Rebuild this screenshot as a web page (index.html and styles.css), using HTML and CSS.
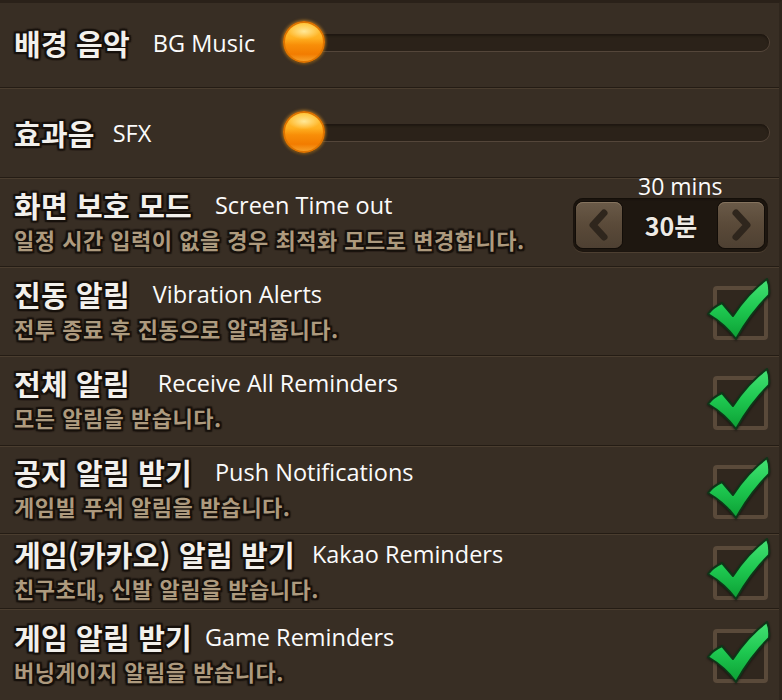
FILE: index.html
```html
<!DOCTYPE html>
<html lang="ko">
<head>
<meta charset="utf-8">
<link rel="stylesheet" href="styles.css">
</head>
<body>
<div class="panel">
  <div class="row slider-row first">
    <div class="line"><span class="ko">배경 음악</span><span class="en">BG Music</span></div>
    <div class="slider"><div class="track"></div><div class="knob"></div></div>
  </div>
  <div class="row slider-row h90">
    <div class="line"><span class="ko">효과음</span><span class="en gap-s">SFX</span></div>
    <div class="slider"><div class="track"></div><div class="knob"></div></div>
  </div>
  <div class="row h89">
    <div class="text">
      <div class="line"><span class="ko">화면 보호 모드</span><span class="en">Screen Time out</span></div>
      <div class="desc">일정 시간 입력이 없을 경우 최적화 모드로 변경합니다.</div>
    </div>
    <div class="stepper">
      <span class="note">30 mins</span>
      <div class="btn">
        <svg viewBox="0 0 46 46" width="46" height="46"><path d="M28 11 L17 23 L28 35" fill="none" stroke="#2f261d" stroke-width="7" stroke-linecap="round" stroke-linejoin="round"/></svg>
      </div>
      <span class="value">30분</span>
      <div class="btn">
        <svg viewBox="0 0 46 46" width="46" height="46"><path d="M18 11 L29 23 L18 35" fill="none" stroke="#2f261d" stroke-width="7" stroke-linecap="round" stroke-linejoin="round"/></svg>
      </div>
    </div>
  </div>
  <div class="row h89">
    <div class="text">
      <div class="line"><span class="ko">진동 알림</span><span class="en">Vibration Alerts</span></div>
      <div class="desc">전투 종료 후 진동으로 알려줍니다.</div>
    </div>
    <div class="check"><svg viewBox="0 0 72 70" width="72" height="70"><defs><linearGradient id="g1" x1="0" y1="0" x2="0" y2="1"><stop offset="0" stop-color="#45e275"/><stop offset="0.5" stop-color="#1ec850"/><stop offset="1" stop-color="#0c9f34"/></linearGradient></defs><path d="M5 40 Q10 33 19 29 L30 42 Q45 19 64 5 Q67 12 66 21 Q47 40 33 65 Q22 50 5 40 Z" fill="url(#g1)" stroke="#0f3518" stroke-width="2" stroke-linejoin="round"/></svg></div>
  </div>
  <div class="row h90">
    <div class="text">
      <div class="line"><span class="ko">전체 알림</span><span class="en gap-l">Receive All Reminders</span></div>
      <div class="desc">모든 알림을 받습니다.</div>
    </div>
    <div class="check"><svg viewBox="0 0 72 70" width="72" height="70"><path d="M5 40 Q10 33 19 29 L30 42 Q45 19 64 5 Q67 12 66 21 Q47 40 33 65 Q22 50 5 40 Z" fill="url(#g1)" stroke="#0f3518" stroke-width="2" stroke-linejoin="round"/></svg></div>
  </div>
  <div class="row h88">
    <div class="text">
      <div class="line"><span class="ko">공지 알림 받기</span><span class="en">Push Notifications</span></div>
      <div class="desc">게임빌 푸쉬 알림을 받습니다.</div>
    </div>
    <div class="check"><svg viewBox="0 0 72 70" width="72" height="70"><path d="M5 40 Q10 33 19 29 L30 42 Q45 19 64 5 Q67 12 66 21 Q47 40 33 65 Q22 50 5 40 Z" fill="url(#g1)" stroke="#0f3518" stroke-width="2" stroke-linejoin="round"/></svg></div>
  </div>
  <div class="row h75">
    <div class="text">
      <div class="line"><span class="ko">게임(카카오) 알림 받기</span><span class="en gap-k">Kakao Reminders</span></div>
      <div class="desc">친구초대, 신발 알림을 받습니다.</div>
    </div>
    <div class="check"><svg viewBox="0 0 72 70" width="72" height="70"><path d="M5 40 Q10 33 19 29 L30 42 Q45 19 64 5 Q67 12 66 21 Q47 40 33 65 Q22 50 5 40 Z" fill="url(#g1)" stroke="#0f3518" stroke-width="2" stroke-linejoin="round"/></svg></div>
  </div>
  <div class="row h90 last">
    <div class="text">
      <div class="line"><span class="ko">게임 알림 받기</span><span class="en gap-xs">Game Reminders</span></div>
      <div class="desc">버닝게이지 알림을 받습니다.</div>
    </div>
    <div class="check"><svg viewBox="0 0 72 70" width="72" height="70"><path d="M5 40 Q10 33 19 29 L30 42 Q45 19 64 5 Q67 12 66 21 Q47 40 33 65 Q22 50 5 40 Z" fill="url(#g1)" stroke="#0f3518" stroke-width="2" stroke-linejoin="round"/></svg></div>
  </div>
</div>
</body>
</html>
```

FILE: styles.css
```css
* { box-sizing: border-box; }
html, body { margin: 0; padding: 0; background: #372d23; }
body { width: 782px; height: 700px; overflow: hidden; }

.panel {
  width: 782px;
  height: 700px;
  background: #382e24;
  border-top: 3px solid #2a2119;
  border-right: 3px solid #2f261d;
  display: flex;
  flex-direction: column;
}

.row {
  display: flex;
  align-items: center;
  justify-content: space-between;
  padding: 0 11px 0 14px;
  border-bottom: 1px solid #241c14;
  box-shadow: inset 0 1px 0 #4a3d2f;
  flex: none;
}
.row.first { box-shadow: none; height: 85px; padding-bottom: 5px; }
.row.last { border-bottom: none; }
.h88 { height: 88px; }
.h89 { height: 89px; }
.h90 { height: 90px; }
.h75 { height: 75px; }

.slider-row {
  display: grid;
  grid-template-columns: 269px 1fr;
  padding-right: 10px;
}

.text { margin-top: -5px; }

.line {
  display: flex;
  align-items: center;
  gap: 23px;
  height: 36px;
}

.ko {
  font-family: "Noto Sans CJK KR", "Noto Sans", sans-serif;
  font-weight: 700;
  font-size: 29px;
  color: #f2f0ec;
  letter-spacing: 0.2px;
  text-shadow:
    -2px -2px 1px #17110c, 2px -2px 1px #17110c, -2px 2px 1px #17110c, 2px 2px 1px #17110c,
    0 -2px 1px #17110c, 0 2px 1px #17110c, -2px 0 1px #17110c, 2px 0 1px #17110c;
  white-space: nowrap;
}

.en {
  font-family: "Open Sans", "Noto Sans", sans-serif;
  font-size: 23.5px;
  color: #fbfbfb;
  white-space: nowrap;
}
.gap-s { margin-left: -5px; }
.gap-l { margin-left: 5px; }
.gap-xs { margin-left: -10px; }
.gap-k { margin-left: -6px; }

.desc {
  margin-top: 2px;
  font-family: "Noto Sans CJK KR", "Noto Sans", sans-serif;
  font-weight: 700;
  font-size: 22px;
  line-height: 28px;
  color: #ad9a7e;
  letter-spacing: 0.5px;
  text-shadow:
    -2px -2px 1px #17110c, 2px -2px 1px #17110c, -2px 2px 1px #17110c, 2px 2px 1px #17110c,
    0 -2px 1px #17110c, 0 2px 1px #17110c, -2px 0 1px #17110c, 2px 0 1px #17110c;
  white-space: nowrap;
}

.slider {
  position: relative;
  height: 44px;
  display: flex;
  align-items: center;
}
.track {
  margin-left: 18px;
  flex: 1;
  height: 17px;
  border-radius: 0 9px 9px 0;
  background: #2b2219;
  box-shadow: inset 0 2px 2px #1f1811, 0 1px 0 #54463a, 1px 0 0 #54463a;
}
.knob {
  position: absolute;
  left: 0;
  top: 0;
  width: 42px;
  height: 42px;
  border-radius: 50%;
  border: 2px solid #de7400;
  background:
    radial-gradient(ellipse 60% 30% at 50% 22%, rgba(255,240,170,0.85), rgba(255,230,150,0) 70%),
    linear-gradient(#ffc83e 0%, #ffb020 40%, #f88e08 58%, #f27c00 82%, #f7a028 100%);
  box-shadow: 0 0 3px 1px rgba(255,170,40,0.55), 0 1px 2px rgba(0,0,0,0.6);
}

.stepper {
  position: relative;
  width: 195px;
  height: 54px;
  margin-top: 6px;
  border-radius: 10px;
  background: #1e1710;
  box-shadow: 0 1px 0 #4d3f31, inset 0 1px 2px #120d08;
  display: flex;
  align-items: center;
  justify-content: space-between;
  padding: 0 4px 0 3px;
}
.note {
  position: absolute;
  left: 65px;
  top: -25px;
  font-family: "Open Sans", "Noto Sans", sans-serif;
  font-size: 23px;
  line-height: 26px;
  color: #fbfbfb;
  white-space: nowrap;
}
.btn {
  width: 46px;
  height: 46px;
  border-radius: 7px;
  background: linear-gradient(#6a5a48, #5a4a39 50%, #4e4032);
  box-shadow: inset 0 1px 0 #85735e, 0 0 0 1px #120d08;
}
.btn svg { display: block; }
.value {
  font-family: "Noto Sans CJK KR", "Noto Sans", sans-serif;
  font-weight: 700;
  font-size: 25px;
  color: #eeeae4;
  text-shadow: 0 0 2px #000;
  margin-left: 2px;
}

.check {
  position: relative;
  width: 55px;
  height: 54px;
  border: 4px solid #5a4a3a;
  border-radius: 4px;
  background: #30271e;
  margin-top: 4px;
}
.check svg {
  position: absolute;
  left: -14px;
  top: -16px;
  overflow: visible;
  filter: drop-shadow(0 1px 1px rgba(0,0,0,0.5));
}
```
